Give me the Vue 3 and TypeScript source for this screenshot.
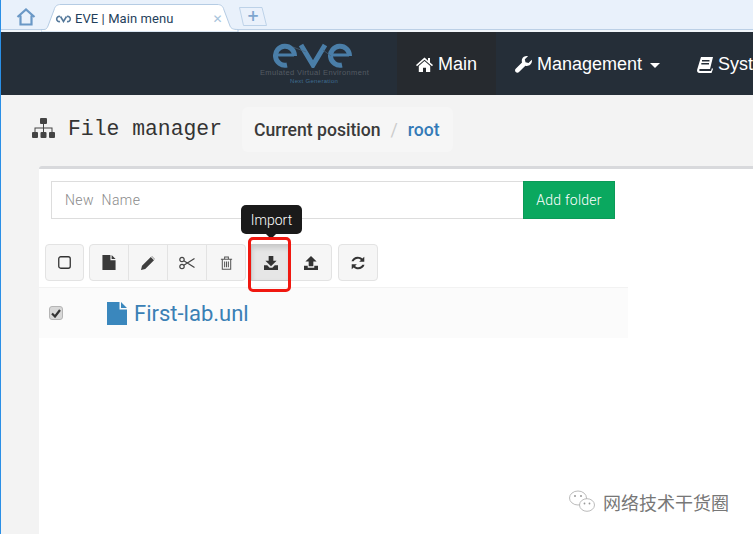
<script setup lang="ts">
const toolsLeft = ['file', 'pencil', 'cut', 'trash']
</script>

<template>
  <div class="root">
    <div class="tabbar">
      <svg class="home-ic" width="20" height="18" viewBox="0 0 20 18">
        <path d="M1.5 9 10 1.5 18.5 9M4.5 7.5V16.500H15.500V7.500" fill="none" stroke="#6a98c6" stroke-width="2.200" />
      </svg>
      <div class="tab">
        <svg class="tab-bg" width="198" height="28" viewBox="0 0 198 28">
          <path d="M0 25.500H3C5 25.500 6 24.500 7 22L13 6C14 2 16 .5 20 .5H176C180 .5 182 2 183 6L189 22C190 24.500 192 25.500 197 25.500V28H0Z" fill="#fff" stroke="#b5cce4" />
        </svg>
        <svg class="tab-logo" width="17" height="8" viewBox="0 0 17 8">
          <path d="M5 1.500A2.600 2.600 0 1 0 5 6.500M12 1.500A2.600 2.600 0 1 1 12 6.500M5.500 1.500 8.500 6.500 11.500 1.500" fill="none" stroke="#54789a" stroke-width="1.600" />
        </svg>
        <span class="tab-title">EVE | Main menu</span>
        <span class="tab-x">✕</span>
      </div>
      <div class="newtab">
        <svg class="newtab-bg" width="28" height="19" viewBox="0 0 28 19">
          <path d="M.5 .5H23L27.500 18.500H4.500Z" fill="#eaf1fb" stroke="#bdd2e8" />
        </svg>
        <span class="plus">+</span>
      </div>
    </div>

    <nav class="navbar">
      <div class="brand">
        <svg class="logo" width="84" height="26" viewBox="0 0 84 26">
          <g fill="none" stroke="#4a7ea8" stroke-width="5">
            <path d="M3 13H21" stroke-width="3" />
            <path d="M21.500 14A9.500 9.500 0 1 0 14 23" />
            <path d="M28 3 40 23 52 3" />
            <path d="M58 13H76" stroke-width="3" />
            <path d="M76.500 14A9.500 9.500 0 1 0 69 23" />
          </g>
          <path d="M20 5 33 10M50 8 58 14" stroke="#4a6379" stroke-width=".7" />
        </svg>
        <div class="brand-line">Emulated Virtual Environment</div>
        <div class="brand-sub">Next Generation</div>
      </div>
      <a class="nav-item active">
        <svg class="nav-ic" width="17" height="15" viewBox="0 0 17 15">
          <path d="M8.500 .5 0 8l1 1.200L8.500 2.800 16 9.200 17 8l-3-2.600V1h-2v2.700ZM8.500 4 2.800 8.900V15H7v-4.200h3V15h4.200V8.900Z" fill="#fff" />
        </svg>
        Main
      </a>
      <a class="nav-item">
        <svg class="nav-ic" width="17" height="17" viewBox="0 0 17 17">
          <path d="M16.800 3.800 13.500 7 10.500 6.200 9.800 3.300 13 .2C10.500-.4 7.800.9 7 3.200 6.700 4.200 6.700 5.300 7 6.400L.7 12.700C-.2 13.600-.2 15 .7 16 1.600 16.900 3.200 16.900 4 16L10.400 9.700C13.800 10.800 17.700 7.800 16.800 3.800Z" fill="#fff" />
        </svg>
        Management
        <i class="caret"></i>
      </a>
      <a class="nav-item">
        <svg class="nav-ic" width="16" height="16" viewBox="0 0 16 16">
          <path d="M4 0H16L13 12H3C2 12 2 14 3 14H14L15 11 16 12 14.500 16H2.500C.5 16-.3 14 .2 12.500ZM5 3V4.500H12.500V3ZM4.300 6V7.500H12V6Z" fill="#fff" fill-rule="evenodd" />
        </svg>
        System
      </a>
    </nav>

    <main class="page">
      <header class="head">
        <svg class="sitemap" width="23" height="20" viewBox="0 0 23 20">
          <g fill="#444">
            <rect x="8" y="0" width="7" height="6" rx="1" />
            <rect x="0" y="14" width="6" height="6" rx="1" />
            <rect x="8.500" y="14" width="6" height="6" rx="1" />
            <rect x="17" y="14" width="6" height="6" rx="1" />
            <path d="M11 6h1v3.500h8.500V14h-1v-3.500H12V14h-1v-3.500H3.500V14h-1V9.500H11Z" />
          </g>
        </svg>
        <h1 class="title">File manager</h1>
        <div class="crumb">
          <span class="crumb-text">Current position</span>
          <span class="crumb-sep">/</span>
          <span class="crumb-link">root</span>
        </div>
      </header>

      <section class="panel">
        <div class="add-row">
          <div class="name-input">New&nbsp; Name</div>
          <div class="add-btn">Add folder</div>
        </div>

        <div class="toolbar">
          <div class="btn solo narrow">
            <svg width="13" height="13" viewBox="0 0 13 13">
              <rect x=".75" y=".75" width="11.500" height="11.500" rx="2" fill="none" stroke="#333" stroke-width="1.300" />
            </svg>
          </div>

          <div class="group">
            <div v-for="t in toolsLeft" :key="t" class="btn">
              <svg v-if="t === 'file'" width="14" height="15" viewBox="0 0 14 16">
                <path d="M0 0H8.500V5.500H14V16H0ZM9.800 0 14 4.200H9.800Z" fill="#3a3a3a" />
              </svg>
              <svg v-else-if="t === 'pencil'" width="14" height="14" viewBox="0 0 14 14">
                <path d="M0 14 1 9.800 9.800 1 13 4.200 4.200 13ZM10.800 0 14 3.200 13.700 3.500 10.500.3Z" fill="#3f3f3f" />
              </svg>
              <svg v-else-if="t === 'cut'" width="16" height="14" viewBox="0 0 16 14">
                <g fill="none" stroke="#444" stroke-width="1.200">
                  <circle cx="3" cy="3.500" r="2.200" />
                  <circle cx="3" cy="10.500" r="2.200" />
                  <path d="M4.800 4.700 15.500 11.500M4.800 9.300 15.500 2.500" />
                </g>
              </svg>
              <svg v-else width="13" height="14" viewBox="0 0 13 15">
                <g fill="none" stroke="#555" stroke-width="1.100">
                  <path d="M.5 3.500H12.500M2 3.500V14.300H11V3.500M4.500 3.500V1H8.500V3.500M4.500 6V12M6.500 6V12M8.500 6V12" />
                </g>
              </svg>
            </div>
          </div>

          <div class="group wide-end">
            <div class="btn pressed">
              <svg width="14" height="14" viewBox="0 0 15 15">
                <path d="M5 0H10V5H13.500L7.500 11 1.500 5H5ZM0 10H3.500L6 12.500H9L11.500 10H15V15H0Z" fill="#333" />
              </svg>
              <span class="tip">Import</span>
              <span class="mark"></span>
            </div>
            <div class="btn">
              <svg width="14" height="14" viewBox="0 0 15 15">
                <path d="M7.500 0 13.500 6H10V11H5V6H1.500ZM0 10.500H4V12.500H11V10.500H15V15H0Z" fill="#333" />
              </svg>
            </div>
          </div>

          <div class="btn solo refresh">
            <svg width="16" height="16" viewBox="0 0 14 14">
              <path d="M1.300 5.500C2 3 4.200 1.500 6.800 1.500 8.400 1.500 9.800 2.100 10.800 3.100L12.500 1.500V6H8L9.600 4.400C8.900 3.700 7.900 3.300 6.900 3.300 5.200 3.300 3.900 4.200 3.200 5.500ZM12.700 8.500C12 11 9.800 12.500 7.200 12.500 5.600 12.500 4.200 11.900 3.200 10.900L1.500 12.500V8H6L4.400 9.600C5.100 10.300 6.100 10.700 7.100 10.700 8.800 10.700 10.100 9.800 10.800 8.500Z" fill="#333" />
            </svg>
          </div>
        </div>

        <div class="file-row">
          <span class="check">
            <svg width="10" height="10" viewBox="0 0 10 10">
              <path d="M1 5.500 4 8.500 9 2" fill="none" stroke="#333" stroke-width="2.200" />
            </svg>
          </span>
          <svg class="file-ic" width="20" height="23" viewBox="0 0 20 23">
            <path d="M0 0H12.500V7.500H20V23H0ZM14 0 20 6H14Z" fill="#3a87bd" />
          </svg>
          <a class="file-name">First-lab.unl</a>
        </div>
      </section>

      <div class="watermark">
        <svg width="27" height="24" viewBox="0 0 27 24">
          <g fill="#fff" stroke="#aaa" stroke-width=".8">
            <ellipse cx="9" cy="8" rx="8.500" ry="7" />
            <ellipse cx="18" cy="15" rx="7.500" ry="6.300" />
          </g>
          <g fill="#999">
            <circle cx="6" cy="6" r="1" />
            <circle cx="12" cy="6" r="1" />
            <circle cx="15.500" cy="13.500" r=".9" />
            <circle cx="20.500" cy="13.500" r=".9" />
          </g>
        </svg>
        <span>网络技术干货圈</span>
      </div>
    </main>
  </div>
</template>

<style scoped>
.root {
  position: relative;
  width: 753px;
  height: 534px;
  overflow: hidden;
  border-left: 1px solid #2a8fe6;
  box-sizing: border-box;
  font-family: "Liberation Sans", Arial, sans-serif;
  background: #f3f3f3;
}
.tabbar {
  height: 32px;
  box-sizing: border-box;
  display: flex;
  align-items: flex-start;
  background: linear-gradient(#e9f1fb 0 29px, #bcd0e6 29px 30px, #f1f5fa 30px);
  padding-left: 15px;
}
.home-ic {
  margin-top: 8px;
}
.tab {
  position: relative;
  width: 198px;
  height: 30px;
  margin: 2px 0 0 5px;
  display: flex;
  align-items: center;
  padding: 3px 0 0 14px;
  box-sizing: border-box;
}
.tab-bg {
  position: absolute;
  left: 0;
  top: 2px;
}
.tab-logo,
.tab-title,
.tab-x {
  position: relative;
}
.tab-title {
  margin-left: 3px;
  font: 13px "Roboto", sans-serif;
  color: #1f3f5c;
  letter-spacing: .08px;
}
.tab-x {
  margin-left: 39px;
  font: bold 12px "DejaVu Sans", sans-serif;
  color: #a8c4dc;
}
.newtab {
  position: relative;
  width: 28px;
  height: 19px;
  margin: 7px 0 0 0;
  text-align: center;
}
.newtab-bg {
  position: absolute;
  left: 0;
  top: 0;
}
.plus {
  position: relative;
  font: bold 15px/19px "DejaVu Sans", sans-serif;
  color: #7ea6cf;
}
.navbar {
  height: 63px;
  background: #252e38;
  display: flex;
  align-items: stretch;
  white-space: nowrap;
  padding-left: 258px;
  color: #fff;
}
.brand {
  flex: 0 0 138px;
  display: flex;
  flex-direction: column;
  padding-top: 10px;
  box-sizing: border-box;
}
.logo {
  margin-left: 14px;
}
.brand-line {
  padding-left: 1px;
  font: 7.500px/10px "Liberation Sans", sans-serif;
  letter-spacing: .36px;
  color: #545b63;
}
.brand-sub {
  margin-left: 31px;
  font: 6px/7px "Liberation Sans", sans-serif;
  color: #3f6d92;
  letter-spacing: .3px;
}
.nav-item {
  flex: 0 0 auto;
  display: flex;
  align-items: center;
  padding: 2px 18px 0 19px;
  font-size: 18px;
  color: #fff;
}
.nav-item.active {
  background: #262a2f;
  padding-right: 19px;
}
.nav-ic {
  margin-right: 5px;
}
.caret {
  width: 0;
  height: 0;
  margin-left: 8px;
  margin-top: 2px;
  border: 5px solid transparent;
  border-top-color: #fff;
  border-bottom: 0;
}
.page {
  position: relative;
  height: 439px;
}
.head {
  height: 71px;
  display: flex;
  align-items: flex-start;
  padding-left: 31px;
}
.sitemap {
  margin-top: 23px;
}
.title {
  margin: 21px 0 0 13px;
  font: 400 21.400px/26px "Liberation Mono", monospace;
  color: #333;
}
.crumb {
  margin: 12px 0 0 20px;
  height: 45px;
  padding: 0 13px 0 12px;
  display: flex;
  align-items: center;
  background: #f6f6f6;
  border-radius: 6px;
  font: 500 17.600px "Roboto", sans-serif;
  box-sizing: border-box;
}
.crumb-text {
  color: #3a3a3a;
}
.crumb-sep {
  margin: 0 10px;
  color: #ccc;
  font-weight: 400;
}
.crumb-link {
  color: #337ab7;
}
.panel {
  margin-left: 38px;
  height: 368px;
  background: #fff;
  border-top: 3px solid #d8d9dc;
  border-top-left-radius: 3px;
  box-sizing: border-box;
}
.add-row {
  display: flex;
  padding: 12px 0 0 12px;
}
.name-input {
  width: 472px;
  height: 38px;
  box-sizing: border-box;
  border: 1px solid #ddd;
  border-right: 0;
  padding-left: 13px;
  font: 300 14px/36px "Roboto", sans-serif;
  letter-spacing: .4px;
  color: #8a8a8a;
}
.add-btn {
  width: 92px;
  height: 38px;
  background: #0aa85f;
  color: #fff;
  text-align: center;
  font: 300 14px/36px "Roboto", sans-serif;
  letter-spacing: .25px;
  border: 1px solid #0b9a58;
  box-sizing: border-box;
}
.toolbar {
  display: flex;
  gap: 5px;
  padding: 25px 0 0 6px;
}
.group {
  display: flex;
}
.btn {
  position: relative;
  width: 40px;
  height: 37px;
  box-sizing: border-box;
  background: #f6f6f6;
  border: 1px solid #e3e3e3;
  margin-left: -1px;
  display: flex;
  align-items: center;
  justify-content: center;
}
.btn.solo {
  margin-left: 0;
  border-radius: 4px;
}
.btn.narrow {
  width: 39px;
}
.btn.refresh {
  margin-left: 1px;
}
.group .btn:first-child {
  margin-left: 0;
  border-radius: 4px 0 0 4px;
}
.group .btn:last-child {
  border-radius: 0 4px 4px 0;
}
.wide-end .btn:last-child {
  width: 42px;
}
.group .btn.pressed {
  background: #e6e6e6;
  border-color: #c8c8c8;
  border-radius: 0;
  box-shadow: inset 0 3px 5px rgba(0, 0, 0, .125);
}
.tip {
  position: absolute;
  left: -11px;
  top: -40px;
  width: 61px;
  height: 29px;
  background: #1a1a1a;
  border-radius: 5px;
  color: #fff;
  font: 300 14px/30px "Roboto", sans-serif;
  text-align: center;
}
.tip::after {
  content: "";
  position: absolute;
  left: 25px;
  top: 29px;
  border: 5px solid transparent;
  border-top-color: #1a1a1a;
  border-bottom: 0;
}
.mark {
  position: absolute;
  z-index: 2;
  left: -4px;
  top: -8px;
  width: 43px;
  height: 55px;
  box-sizing: border-box;
  border: 3px solid #f01810;
  border-radius: 5px;
}
.file-row {
  width: 589px;
  height: 51px;
  margin-top: 6px;
  background: #fbfbfb;
  border-top: 1px solid #f2f2f2;
  box-sizing: border-box;
  display: flex;
  align-items: center;
  padding-left: 10px;
}
.check {
  width: 14px;
  height: 14px;
  box-sizing: border-box;
  background: #d8d8d8;
  border: 1px solid #b5b5b5;
  border-radius: 3px;
  display: flex;
  align-items: center;
  justify-content: center;
}
.file-ic {
  margin-left: 44px;
}
.file-name {
  margin-left: 7px;
  font: 400 22px "Roboto", sans-serif;
  color: #3a80b5;
}
.watermark {
  position: absolute;
  left: 568px;
  top: 394px;
  display: flex;
  align-items: center;
  gap: 7px;
  font: 18px "Noto Sans CJK SC", sans-serif;
  color: #777;
}
</style>
